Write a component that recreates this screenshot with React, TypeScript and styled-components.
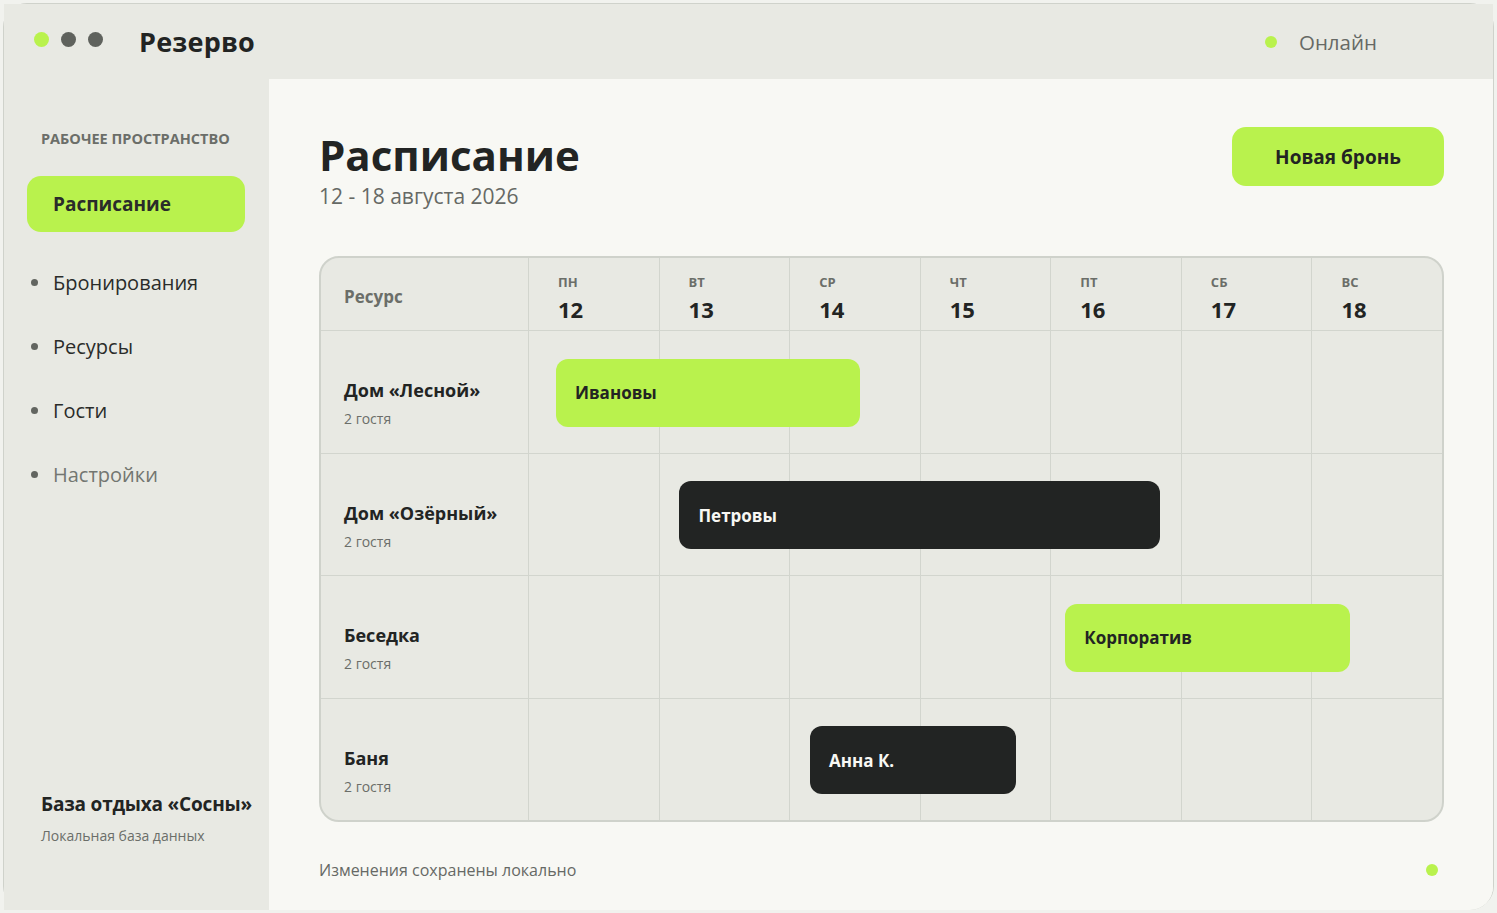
import React from "react";
import styled, { createGlobalStyle } from "styled-components";

const GlobalStyle = createGlobalStyle`
  html, body {
    margin: 0;
    padding: 0;
    background: #f1f2ee;
  }
  body {
    font-family: "Open Sans", "Noto Sans", "Liberation Sans", sans-serif;
    color: #222423;
  }
  * { box-sizing: border-box; }
`;

const Page = styled.div`
  padding: 3px;
  height: 913px;
`;

const Window = styled.div`
  height: 907px;
  border: 1.5px solid #cfd2cb;
  border-radius: 24px;
  display: grid;
  grid-template-columns: 265px 1fr;
  grid-template-rows: 75px 1fr;
  background: #f8f8f4;
`;

const TopBar = styled.header`
  grid-column: 1 / -1;
  display: flex;
  align-items: center;
  padding: 0 116px 0 30px;
  background: #e8e9e3;
`;

const Dots = styled.div`
  display: flex;
  gap: 12px;
  margin-top: -5px;
`;

const Dot = styled.span<{ $color: string; $size?: number }>`
  display: block;
  flex: none;
  width: ${(p) => p.$size ?? 15}px;
  height: ${(p) => p.$size ?? 15}px;
  border-radius: 50%;
  background: ${(p) => p.$color};
`;

const Brand = styled.div`
  margin-left: 36px;
  font-size: 27px;
  font-weight: 700;
  letter-spacing: 0.2px;
`;

const Status = styled.div`
  margin-left: auto;
  display: flex;
  align-items: center;
  gap: 22px;
  font-size: 20.5px;
  color: #666965;
`;

const Sidebar = styled.aside`
  background: #e8e9e3;
  display: flex;
  flex-direction: column;
  padding: 50px 20px 65px 23px;
`;

const SectionLabel = styled.div`
  padding-left: 14px;
  font-size: 14.5px;
  font-weight: 700;
  color: #6b6e69;
  margin-bottom: 28px;
`;

const NavList = styled.nav`
  display: flex;
  flex-direction: column;
  gap: 8px;
  margin-right: 4px;
`;

const NavItem = styled.div<{ $active?: boolean; $muted?: boolean }>`
  height: 56px;
  display: flex;
  align-items: center;
  gap: 15px;
  padding-left: ${(p) => (p.$active ? "26px" : "4px")};
  border-radius: 14px;
  font-size: ${(p) => (p.$active ? "19px" : "20px")};
  font-weight: ${(p) => (p.$active ? 700 : 400)};
  background: ${(p) => (p.$active ? "#b9f24d" : "transparent")};
  color: ${(p) => (p.$muted ? "#737671" : "#2a2c2a")};
  margin-bottom: ${(p) => (p.$active ? "14px" : "0")};
`;

const Bullet = styled.span`
  width: 7px;
  height: 7px;
  border-radius: 50%;
  background: #626560;
`;

const SidebarFooter = styled.div`
  margin-top: auto;
  padding-left: 14px;
  white-space: nowrap;
`;

const PlaceName = styled.div`
  font-size: 19px;
  font-weight: 700;
  letter-spacing: -0.2px;
`;

const PlaceNote = styled.div`
  margin-top: 9px;
  font-size: 14px;
  color: #6b6e69;
`;

const Main = styled.main`
  display: flex;
  flex-direction: column;
  padding: 48px 49px 0 50px;
  background: #f8f8f4;
  border-bottom-right-radius: 23px;
`;

const TitleRow = styled.div`
  display: flex;
  justify-content: space-between;
  align-items: flex-start;
`;

const Title = styled.h1`
  margin: 0;
  font-size: 42px;
  line-height: 56px;
  font-weight: 700;
`;

const Subtitle = styled.div`
  font-size: 21px;
  line-height: 28px;
  color: #666965;
  margin-top: -1px;
`;

const PrimaryButton = styled.button`
  width: 212px;
  height: 59px;
  border: none;
  border-radius: 14px;
  background: #b9f24d;
  color: #222423;
  font-family: inherit;
  font-size: 19px;
  font-weight: 700;
`;

const Table = styled.div`
  margin-top: 46px;
  border: 2px solid #cfd2cb;
  border-radius: 20px;
  overflow: hidden;
  background: #e8e9e3;
`;

const Row = styled.div<{ $head?: boolean }>`
  display: grid;
  grid-template-columns: 207px repeat(7, 1fr);
  height: ${(p) => (p.$head ? "72px" : "122.5px")};
  & + & {
    border-top: 1px solid #d2d5ce;
  }
`;

const ResourceCell = styled.div<{ $head?: boolean }>`
  grid-row: 1;
  grid-column: 1;
  display: flex;
  flex-direction: column;
  justify-content: center;
  padding-left: 23px;
  padding-top: ${(p) => (p.$head ? "4px" : "23px")};
`;

const HeadLabel = styled.div`
  font-size: 17px;
  font-weight: 700;
  color: #6b6e69;
`;

const ResourceName = styled.div`
  font-size: 18px;
  font-weight: 700;
`;

const ResourceMeta = styled.div`
  margin-top: 7px;
  font-size: 14px;
  color: #6b6e69;
`;

const DayCell = styled.div<{ $col: number }>`
  grid-row: 1;
  grid-column: ${(p) => p.$col};
  border-left: 1px solid #d2d5ce;
`;

const DayHead = styled(DayCell)`
  display: flex;
  flex-direction: column;
  padding: 15px 0 0 29px;
`;

const DayName = styled.div`
  font-size: 13px;
  font-weight: 700;
  color: #6b6e69;
  line-height: 18px;
`;

const DayNum = styled.div`
  font-size: 22px;
  font-weight: 700;
  line-height: 30px;
  margin-top: 3px;
`;

const Track = styled.div`
  grid-row: 1;
  grid-column: 2 / -1;
  display: flex;
  align-items: center;
  padding-top: 2px;
`;

const Booking = styled.div<{ $dark?: boolean }>`
  height: 68px;
  border-radius: 12px;
  display: flex;
  align-items: center;
  padding-left: 19px;
  font-size: 17px;
  font-weight: 700;
  background: ${(p) => (p.$dark ? "#222423" : "#b9f24d")};
  color: ${(p) => (p.$dark ? "#f8f8f4" : "#222423")};
`;

const Footer = styled.div`
  margin-top: auto;
  height: 88px;
  display: flex;
  align-items: center;
  justify-content: space-between;
  padding: 7px 6px 0 0;
  font-size: 16px;
  color: #666965;
`;

const days = [
  ["ПН", 12],
  ["ВТ", 13],
  ["СР", 14],
  ["ЧТ", 15],
  ["ПТ", 16],
  ["СБ", 17],
  ["ВС", 18],
] as const;

// start / end are in day units from the beginning of the week
const resources = [
  { name: "Дом «Лесной»", guests: "2 гостя", booking: { label: "Ивановы", start: 0.214, end: 2.546, dark: false } },
  { name: "Дом «Озёрный»", guests: "2 гостя", booking: { label: "Петровы", start: 1.16, end: 4.84, dark: true } },
  { name: "Беседка", guests: "2 гостя", booking: { label: "Корпоратив", start: 4.115, end: 6.295, dark: false } },
  { name: "Баня", guests: "2 гостя", booking: { label: "Анна К.", start: 2.16, end: 3.735, dark: true } },
];

const nav = ["Бронирования", "Ресурсы", "Гости"];

export default function App() {
  return (
    <>
      <GlobalStyle />
      <Page>
        <Window>
          <TopBar>
            <Dots>
              <Dot $color="#b9f24d" />
              <Dot $color="#5f625d" />
              <Dot $color="#5f625d" />
            </Dots>
            <Brand>Резерво</Brand>
            <Status>
              <Dot $color="#b9f24d" $size={12} />
              Онлайн
            </Status>
          </TopBar>

          <Sidebar>
            <SectionLabel>РАБОЧЕЕ ПРОСТРАНСТВО</SectionLabel>
            <NavList>
              <NavItem $active>Расписание</NavItem>
              {nav.map((item) => (
                <NavItem key={item}>
                  <Bullet />
                  {item}
                </NavItem>
              ))}
              <NavItem $muted>
                <Bullet />
                Настройки
              </NavItem>
            </NavList>
            <SidebarFooter>
              <PlaceName>База отдыха «Сосны»</PlaceName>
              <PlaceNote>Локальная база данных</PlaceNote>
            </SidebarFooter>
          </Sidebar>

          <Main>
            <TitleRow>
              <div>
                <Title>Расписание</Title>
                <Subtitle>12 - 18 августа 2026</Subtitle>
              </div>
              <PrimaryButton>Новая бронь</PrimaryButton>
            </TitleRow>

            <Table>
              <Row $head>
                <ResourceCell $head>
                  <HeadLabel>Ресурс</HeadLabel>
                </ResourceCell>
                {days.map(([d, n], i) => (
                  <DayHead key={d} $col={i + 2}>
                    <DayName>{d}</DayName>
                    <DayNum>{n}</DayNum>
                  </DayHead>
                ))}
              </Row>
              {resources.map((r) => (
                <Row key={r.name}>
                  <ResourceCell>
                    <ResourceName>{r.name}</ResourceName>
                    <ResourceMeta>{r.guests}</ResourceMeta>
                  </ResourceCell>
                  {days.map(([d], i) => (
                    <DayCell key={d} $col={i + 2} />
                  ))}
                  <Track>
                    <Booking
                      $dark={r.booking.dark}
                      style={{
                        marginLeft: `${(r.booking.start / 7) * 100}%`,
                        width: `${((r.booking.end - r.booking.start) / 7) * 100}%`,
                      }}
                    >
                      {r.booking.label}
                    </Booking>
                  </Track>
                </Row>
              ))}
            </Table>

            <Footer>
              Изменения сохранены локально
              <Dot $color="#b9f24d" $size={12} />
            </Footer>
          </Main>
        </Window>
      </Page>
    </>
  );
}
